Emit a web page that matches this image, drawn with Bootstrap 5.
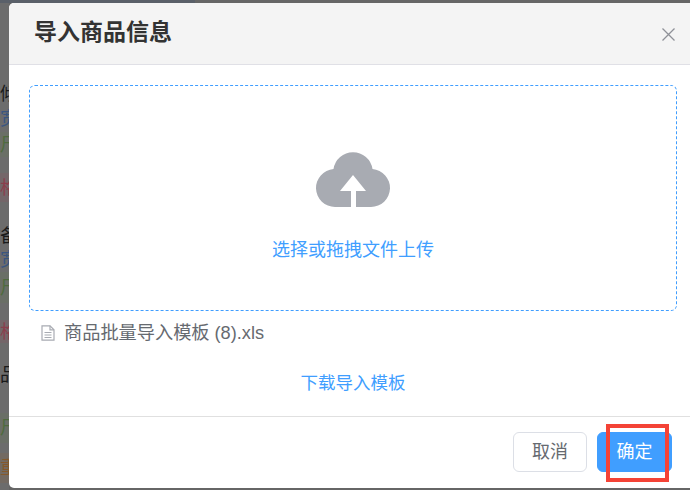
<!DOCTYPE html>
<html lang="zh">
<head>
<meta charset="utf-8">
<title>导入商品信息</title>
<link rel="stylesheet" href="https://cdn.jsdelivr.net/npm/bootstrap@5.3.0/dist/css/bootstrap.min.css">
<style>
html,body{height:490px;overflow:hidden;}
body{background:#666;font-family:"Liberation Sans","Noto Sans CJK SC",sans-serif;}
.scene{height:490px;position:relative;overflow:hidden;}
.topstrip{height:3px;width:195px;background:#5a6069;}
.behind{position:absolute;left:0;top:0;width:9px;height:490px;overflow:hidden;font-size:18px;background:#6c6c6c;}
.bcell{display:flex;align-items:center;white-space:nowrap;overflow:visible;line-height:1;}
.h16{height:16px}.h10{height:10px}.h12{height:12px}.h17{height:17px}.h18{height:18px}.h22{height:22px}
.h78{height:78px}.h27{height:27px}.h25{height:25px}.h29{height:29px}.h31{height:31px}.h23{height:23px}.h36{height:36px}.h30{height:30px}
.bk{color:#1a1a1a;padding-top:4px;}.bb{color:#3a5580;}
.bg{color:#4f6b3e;background:#6a6f66;}
.br{color:#8b3e4c;background:#746669;}
.bo{color:#85592c;background:#736a62;}
.dlg{margin-left:9px;height:485px;width:700px;background:#fff;border-radius:5px 0 0 5px;overflow:hidden;}
.dlg-head{height:62px;background:#f4f4f4;border-bottom:1px solid #e0e0e6;padding:0 14px 2px 26px;width:681px;}
.dlg-title{font-size:23px;font-weight:700;color:#333;margin:0 0 0 -1px;line-height:1;}
.closer{width:15px;height:15px;margin-top:3px;}
.dlg-main{padding:20px 13px 0 20px;width:681px;height:351px;}
.drop{height:226px;border:1px dashed #409eff;border-radius:6px;padding-top:66px;}
.cloudic{width:74px;height:55px;display:block;}
.droptxt{color:#409eff;font-size:18px;line-height:20px;margin-top:33px;}
.fileline{color:#666a70;font-size:18.2px;line-height:22px;margin-top:11px;padding-left:12px;gap:9px;}
.fileic{width:14px;height:16px;}
.dllink{color:#409eff;font-size:17.500px;line-height:22px;margin-top:28px;text-decoration:none;display:block;text-align:center;}
.dlg-foot{border-top:1px solid #e0e0e0;height:72px;padding:15px 18px 0 0;width:681px;gap:10px;}
.btn-cancel,.btn-ok{height:40px;font-size:18px;line-height:1;border-radius:6px;padding:0;}
.btn-cancel{width:74px;background:#fff;border:1px solid #dcdfe6;color:#666a70;}
.btn-ok{width:75px;background:#409eff;border:1px solid #409eff;color:#fff;}
.redmark{position:absolute;left:606px;top:424px;width:63px;height:58px;border:4px solid #f44336;}
</style>
</head>
<body>
<div class="scene">
  <div class="behind" aria-hidden="true">
    <div class="h78"></div>
    <div class="bcell bk h27">倾</div>
    <div class="bcell bb h27">宽</div>
    <div class="bcell bg h25">尺</div>
    <div class="h16"></div>
    <div class="bcell br h29">格</div>
    <div class="h18"></div>
    <div class="bcell bk h27">备</div>
    <div class="bcell bb h25">宽</div>
    <div class="bcell bg h31">尺</div>
    <div class="h17"></div>
    <div class="bcell br h23">格</div>
    <div class="h12"></div>
    <div class="bcell bk h36">品</div>
    <div class="h22"></div>
    <div class="bcell bg h30">尺</div>
    <div class="h10"></div>
    <div class="bcell bo h30">重</div>
  </div>
  <div class="topstrip position-relative"></div>
  <div class="dlg d-flex flex-column position-relative">
    <div class="dlg-head d-flex align-items-center">
      <h5 class="dlg-title flex-grow-1">导入商品信息</h5>
      <svg class="closer" viewBox="0 0 15 15" fill="none" stroke="#8f9198" stroke-width="1.3"><path d="M1.5 1.5l12 12M13.5 1.5l-12 12"/></svg>
    </div>
    <div class="dlg-main">
      <div class="drop text-center">
        <svg class="cloudic mx-auto" viewBox="0 0 74 55"><path fill="#a8abb2" d="M19 55A19 19 0 0 1 17.500 17.060 19.700 19.700 0 0 1 56.500 17.060 19 19 0 0 1 55 55H40V39H50L37 23 24 39H35V55Z"/></svg>
        <div class="droptxt">选择或拖拽文件上传</div>
      </div>
      <div class="fileline d-flex align-items-center">
        <svg class="fileic" viewBox="0 0 14 16" fill="none" stroke="#a8abb2" stroke-width="1.2"><path d="M1 .8H9L13 4.800V15.200H1Z"/><path d="M9 .8V4.800H13M3.500 7.500H10.500M3.500 10H10.500M3.500 12.500H10.500"/></svg>
        <span>商品批量导入模板 (8).xls</span>
      </div>
      <a class="dllink" href="#">下载导入模板</a>
    </div>
    <div class="dlg-foot d-flex justify-content-end">
      <button type="button" class="btn btn-cancel">取消</button>
      <button type="button" class="btn btn-ok">确定</button>
    </div>
  </div>
  <div class="redmark"></div>
</div>
<script src="https://cdn.jsdelivr.net/npm/bootstrap@5.3.0/dist/js/bootstrap.bundle.min.js"></script>
</body>
</html>
